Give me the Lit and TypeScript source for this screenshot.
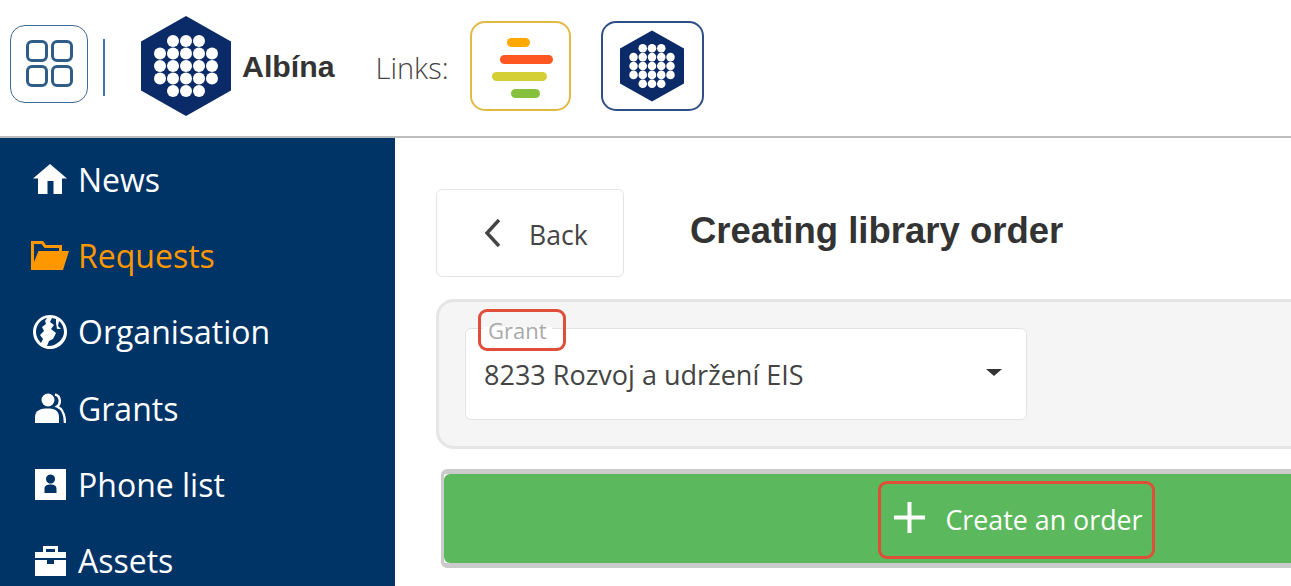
import { LitElement, html, css, svg } from "lit";
import { customElement } from "lit/decorators.js";

const hexDots = () => {
  const rows: [number, number[]][] = [
    [-25, [-13, 0, 13]],
    [-12.5, [-26, -13, 0, 13, 26]],
    [0, [-26, -13, 0, 13, 26]],
    [12.5, [-26, -13, 0, 13, 26]],
    [25, [-13, 0, 13]],
  ];
  return rows.flatMap(([y, xs]) =>
    xs.map((x) => svg`<circle cx=${x + 50} cy=${y + 50} r="6" fill="#fff"></circle>`)
  );
};

const hex = (w: number, h: number) => html`<svg class="hex" width=${w} height=${h} viewBox="5 0 90 100">
  <polygon points="50,0 95,25.5 95,74.5 50,100 5,74.5 5,25.5" fill="#0b2a68"></polygon>
  ${hexDots()}
</svg>`;

const icons: Record<string, unknown> = {
  home: svg`<path fill="currentColor" d="M17 0 L34 14.5 H29 V30 H20.5 V17 H14.5 V30 H5 V14.5 H0 Z"></path>`,
  folder: svg`<path fill="currentColor" fill-rule="evenodd" d="M0 0 H12 L15 4 H31 V10 H38 L32 29 H0 Z M3 3 V21 L7.5 10 H28 V7 H13.5 L10.5 3 Z"></path>`,
  globe: svg`<path fill="currentColor" fill-rule="evenodd" d="M17 0 A17 17 0 1 0 17.01 0 Z M14 3 C8 4 3 10 3 17 C3 21 5 25 8 28 L10 24 L7 20 L11 16 L9 12 L13 9 L12 6 Z M19 3 L17 7 L21 10 L18 14 L23 18 L20 24 L16 26 L14 31 C22 32 31 25 31 17 C31 13 29 8 26 6 L25 11 L28 14 L24 14 L23 8 L23 4 Z"></path>`,
  users: svg`<circle cx="13" cy="7" r="6.5" fill="currentColor"></circle><path fill="currentColor" d="M0 30 V24 C0 17 6 15.5 13 15.5 C20 15.5 24 18 24 24 V30 Z"></path><path fill="none" stroke="currentColor" stroke-width="2.4" d="M20 1.5 C26 3 26 11 22 13.5 C28 16 30 22 30 30"></path>`,
  contact: svg`<path fill="currentColor" fill-rule="evenodd" d="M0 0 H31 V31 H0 Z M15.5 5.5 A4.5 4.5 0 1 0 15.51 5.5 Z M9.5 24 H21.5 V20 C21.5 16.5 19 15.5 15.5 15.5 C12 15.5 9.5 16.5 9.5 20 Z"></path>`,
  case: svg`<path fill="currentColor" fill-rule="evenodd" d="M8 0 H23 V6 H31 V12 H0 V6 H8 Z M11 3 V6 H20 V3 Z M0 14 H12 V18 H19 V14 H31 V30 H0 Z"></path>`,
};

const nav = [
  { label: "News", icon: "home", w: 34, h: 30, vb: "0 0 34 30" },
  { label: "Requests", icon: "folder", w: 38, h: 29, vb: "0 0 38 29", active: true },
  { label: "Organisation", icon: "globe", w: 34, h: 34, vb: "0 0 34 34" },
  { label: "Grants", icon: "users", w: 31, h: 30, vb: "0 0 31 30" },
  { label: "Phone list", icon: "contact", w: 31, h: 31, vb: "0 0 31 31" },
  { label: "Assets", icon: "case", w: 31, h: 30, vb: "0 0 31 30" },
];

@customElement("app-root")
export class AppRoot extends LitElement {
  static styles = css`
    :host {
      display: block;
      width: 100%;
      height: 100vh;
      overflow: hidden;
      background: #fff;
      font-family: "Open Sans", "Noto Sans", sans-serif;
      color: #444;
    }
    .hex { display: block; }
    .header {
      box-sizing: border-box;
      height: 138px;
      border-bottom: 2px solid #bdbdbd;
      display: flex;
      align-items: center;
      padding: 0 0 4px 10px;
    }
    .apps {
      width: 78px;
      height: 78px;
      box-sizing: border-box;
      border: 1.5px solid #3f6a94;
      border-radius: 15px;
      display: grid;
      grid-template-columns: 22px 22px;
      grid-auto-rows: 22px;
      gap: 3px;
      justify-content: center;
      align-content: center;
      margin-bottom: 5px;
    }
    .apps i {
      display: block;
      border: 3px solid #2f5d87;
      border-radius: 6px;
    }
    .sep {
      width: 2px;
      height: 57px;
      margin: 3px 36px 0 15px;
      background: #3b7ab0;
    }
    .name {
      margin: 2px 0 0 11px;
      font: bold 30.3px "Liberation Sans", Arial, sans-serif;
      color: #333;
    }
    .links {
      margin: 3px 0 0 41px;
      font-size: 29px;
      font-weight: 300;
      color: #444;
    }
    .link {
      width: 101px;
      height: 90px;
      box-sizing: border-box;
      border: 2px solid #e3b945;
      border-radius: 15px;
      display: flex;
      flex-direction: column;
      justify-content: center;
      margin-left: 21px;
      padding-top: 4px;
    }
    .link.blue {
      width: 103px;
      margin-left: 30px;
      padding-top: 0;
      border-color: #2f4f86;
      align-items: center;
    }
    .bar { height: 9.5px; border-radius: 5px; margin-bottom: 7.5px; }
    .bar:last-child { margin-bottom: 0; }
    .b1 { width: 23px; margin-left: 35px; background: #ffa800; }
    .b2 { width: 53px; margin-left: 28px; background: #ff5722; }
    .b3 { width: 55px; margin-left: 20px; background: #d4cf35; }
    .b4 { width: 29px; margin-left: 39px; background: #85c13d; }

    .body { display: flex; height: 448px; }
    .side {
      width: 395px;
      flex: none;
      height: 100%;
      background: #003366;
      padding: 3px 0 0 0;
      box-sizing: border-box;
      overflow: hidden;
    }
    .item {
      height: 76.3px;
      display: flex;
      align-items: center;
      color: #fff;
      font-size: 32px;
      white-space: nowrap;
    }
    .item.active { color: #ff9800; }
    .ic {
      width: 78px;
      flex: none;
      display: flex;
      justify-content: center;
      padding: 0 8px 0 30px;
      box-sizing: border-box;
    }
    .ic svg { display: block; flex: none; }

    .main {
      flex: 1;
      min-width: 0;
      overflow: hidden;
      padding: 51px 0 0 41px;
    }
    .top { display: flex; align-items: center; }
    .back {
      width: 188px;
      height: 88px;
      box-sizing: border-box;
      border: 1.5px solid #e4e4e4;
      border-radius: 6px;
      display: flex;
      align-items: center;
      font-size: 26.6px;
      padding-left: 47px;
      color: #444;
    }
    .back span { position: relative; top: 2px; }
    .back svg { margin-right: 28px; display: block; }
    h1 {
      margin: 0 0 0 66px;
      font: bold 36.5px "Liberation Sans", Arial, sans-serif;
      color: #333;
      position: relative;
      top: -2px;
    }
    .panel {
      width: 1200px;
      height: 150px;
      box-sizing: border-box;
      margin-top: 22px;
      background: #f5f5f5;
      border: 3px solid #e5e5e5;
      border-radius: 18px;
      padding: 26px 0 0 26px;
    }
    .select {
      width: 562px;
      height: 92px;
      box-sizing: border-box;
      background: #fff;
      border: 1.5px solid #e3e3e3;
      border-radius: 6px;
      position: relative;
      display: flex;
      align-items: center;
      justify-content: space-between;
      padding: 0 24px 0 18px;
      font-size: 27px;
      color: #444;
    }
    .legend {
      position: absolute;
      left: 17px;
      top: -12px;
      padding: 0 5px;
      line-height: 26px;
      font-size: 22px;
      color: #aaa;
      background: linear-gradient(#f5f5f5 40%, #fff 40%);
    }
    .mark {
      position: absolute;
      border: 3.5px solid #e04e39;
      border-radius: 9px;
      box-sizing: border-box;
      pointer-events: none;
    }
    .legend .mark { left: -5px; right: -14px; top: -8px; bottom: -8px; }
    .caret {
      width: 0;
      height: 0;
      border-left: 8.5px solid transparent;
      border-right: 8.5px solid transparent;
      border-top: 7px solid #333;
      position: relative;
      top: -2px;
    }
    .create-wrap {
      margin: 20px 0 0 5px;
      width: 1157px;
      box-sizing: border-box;
      border: 5px solid #cbcbcb;
      border-left-width: 3px;
      border-radius: 6px;
    }
    .create {
      height: 89px;
      background: #5cb85c;
      border-radius: 6px;
      display: flex;
      align-items: center;
      justify-content: center;
      color: #fff;
      font-size: 26.8px;
    }
    .cc {
      position: relative;
      display: flex;
      align-items: center;
      gap: 20px;
    }
    .cc > span:not(.mark) { position: relative; top: 1px; }
    .cc svg { display: block; position: relative; top: -1px; }
    .cc .mark { left: -16px; right: -12px; top: -19px; bottom: -22px; }
  `;

  render() {
    return html`
      <div class="header">
        <div class="apps"><i></i><i></i><i></i><i></i></div>
        <div class="sep"></div>
        ${hex(90, 100)}
        <div class="name">Albína</div>
        <div class="links">Links:</div>
        <div class="link">
          <div class="bar b1"></div>
          <div class="bar b2"></div>
          <div class="bar b3"></div>
          <div class="bar b4"></div>
        </div>
        <div class="link blue">${hex(64, 72)}</div>
      </div>
      <div class="body">
        <div class="side">
          ${nav.map(
            (n) => html`<div class="item ${n.active ? "active" : ""}">
              <span class="ic"><svg width=${n.w} height=${n.h} viewBox=${n.vb}>${icons[n.icon]}</svg></span>
              <span>${n.label}</span>
            </div>`
          )}
        </div>
        <div class="main">
          <div class="top">
            <div class="back">
              <svg width="17" height="30" viewBox="0 0 17 30"><path d="M15 2 L3 15 L15 28" fill="none" stroke="#444" stroke-width="3.4"></path></svg>
              <span>Back</span>
            </div>
            <h1>Creating library order</h1>
          </div>
          <div class="panel">
            <div class="select">
              <span class="legend">Grant<span class="mark"></span></span>
              <span>8233 Rozvoj a udržení EIS</span>
              <span class="caret"></span>
            </div>
          </div>
          <div class="create-wrap">
            <div class="create">
              <div class="cc">
                <svg width="31" height="31" viewBox="0 0 31 31"><path d="M15.5 0 V31 M0 15.5 H31" stroke="#fff" stroke-width="4" fill="none"></path></svg>
                <span>Create an order</span>
                <span class="mark"></span>
              </div>
            </div>
          </div>
        </div>
      </div>
    `;
  }
}
